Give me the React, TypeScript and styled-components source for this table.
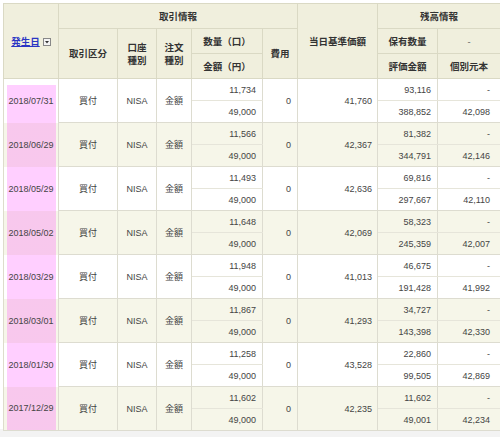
import React from "react";
import styled, { createGlobalStyle } from "styled-components";

const GlobalStyle = createGlobalStyle`
  html, body {
    margin: 0;
    padding: 0;
    background: #f3f3f3;
  }
  body {
    font-family: "Liberation Sans", "Noto Sans CJK JP", sans-serif;
  }
`;

const Page = styled.div`
  width: 500px;
  height: 437px;
  overflow: hidden;
  background: linear-gradient(#ffffff, #ffffff) no-repeat;
  background-size: 100% 429px;
  padding: 3px 0 0 3px;
  box-sizing: border-box;
`;

const Table = styled.table`
  border-collapse: collapse;
  table-layout: fixed;
  width: 497px;
  font-size: 9px;
  color: #444;
  border-top: 1px solid #dddccc;
  border-left: 1px solid #dddccc;
`;

const HeadCell = styled.th<{ $align?: string }>`
  background: #f0efdd;
  border: 1px solid #dad9c4;
  color: #333;
  font-weight: bold;
  font-size: 9.5px;
  line-height: 13px;
  padding: 0 4px;
  text-align: ${(p) => p.$align || "center"};
  vertical-align: middle;
  white-space: nowrap;
`;

const HeadRow = styled.tr`
  height: 25px;
`;

const SubRow = styled.tr`
  height: 22px;
`;

const Cell = styled.td<{ $alt: boolean; $align?: string; $pad?: number; $split?: boolean }>`
  background: ${(p) => (p.$alt ? "#f6f6e9" : "#ffffff")};
  border-right: 1px solid #dddcd0;
  border-bottom: 1px solid ${(p) => (p.$split ? "#e6e5da" : "#dddcd0")};
  text-align: ${(p) => p.$align || "center"};
  padding: 0 ${(p) => (p.$pad ?? 4)}px 0 4px;
  vertical-align: middle;
  white-space: nowrap;
  line-height: 12px;
`;

const DateCell = styled.td<{ $alt: boolean; $first: boolean; $last: boolean }>`
  background-color: ${(p) => (p.$alt ? "#f6f6e9" : "#ffffff")};
  background-image: linear-gradient(
    to right,
    transparent 3px,
    rgba(255, 0, 255, 0.19) 3px,
    rgba(255, 0, 255, 0.19) calc(100% - 2px),
    transparent calc(100% - 2px)
  );
  background-repeat: no-repeat;
  background-position: 0 ${(p) => (p.$first ? 6 : 0)}px;
  background-size: 100% calc(100% - ${(p) => (p.$first ? 6 : 0)}px);
  border-right: 1px solid #dddcd0;
  border-bottom: ${(p) => (p.$last ? "1px solid #dddcd0" : "none")};
  text-align: center;
  vertical-align: middle;
  padding: 0;
  color: #444;
  line-height: 12px;
`;

const SortLink = styled.a`
  color: #2b35c4;
  text-decoration: underline;
  font-weight: bold;
`;

const SortBox = styled.svg`
  vertical-align: -1px;
  margin-left: 3px;
`;

const Dash = styled.span`
  color: #666;
  font-weight: normal;
`;

type Row = {
  date: string;
  qty: string;
  amt: string;
  fee: string;
  nav: string;
  hold: string;
  val: string;
  cost: string;
};

const rows: Row[] = [
  { date: "2018/07/31", qty: "11,734", amt: "49,000", fee: "0", nav: "41,760", hold: "93,116", val: "388,852", cost: "42,098" },
  { date: "2018/06/29", qty: "11,566", amt: "49,000", fee: "0", nav: "42,367", hold: "81,382", val: "344,791", cost: "42,146" },
  { date: "2018/05/29", qty: "11,493", amt: "49,000", fee: "0", nav: "42,636", hold: "69,816", val: "297,667", cost: "42,110" },
  { date: "2018/05/02", qty: "11,648", amt: "49,000", fee: "0", nav: "42,069", hold: "58,323", val: "245,359", cost: "42,007" },
  { date: "2018/03/29", qty: "11,948", amt: "49,000", fee: "0", nav: "41,013", hold: "46,675", val: "191,428", cost: "41,992" },
  { date: "2018/03/01", qty: "11,867", amt: "49,000", fee: "0", nav: "41,293", hold: "34,727", val: "143,398", cost: "42,330" },
  { date: "2018/01/30", qty: "11,258", amt: "49,000", fee: "0", nav: "43,528", hold: "22,860", val: "99,505", cost: "42,869" },
  { date: "2017/12/29", qty: "11,602", amt: "49,000", fee: "0", nav: "42,235", hold: "11,602", val: "49,001", cost: "42,234" },
];

const widths = [55, 59, 39, 35, 71, 35, 80, 60, 63];

export default function App() {
  return (
    <>
      <GlobalStyle />
      <Page>
        <Table>
          <colgroup>
            {widths.map((w, i) => (
              <col key={i} style={{ width: w }} />
            ))}
          </colgroup>
          <thead>
            <HeadRow>
              <HeadCell rowSpan={3}>
                <SortLink href="#">発生日</SortLink>
                <SortBox width="8" height="8" viewBox="0 0 8 8">
                  <rect x="0.5" y="0.5" width="7" height="7" fill="#f4f4f4" stroke="#888" />
                  <path d="M2 3h4L4 5.5z" fill="#333" />
                </SortBox>
              </HeadCell>
              <HeadCell colSpan={5}>取引情報</HeadCell>
              <HeadCell rowSpan={3}>当日基準価額</HeadCell>
              <HeadCell colSpan={2}>残高情報</HeadCell>
            </HeadRow>
            <HeadRow>
              <HeadCell rowSpan={2}>取引区分</HeadCell>
              <HeadCell rowSpan={2}>
                口座
                <br />
                種別
              </HeadCell>
              <HeadCell rowSpan={2}>
                注文
                <br />
                種別
              </HeadCell>
              <HeadCell>数量（口）</HeadCell>
              <HeadCell rowSpan={2}>費用</HeadCell>
              <HeadCell>保有数量</HeadCell>
              <HeadCell>
                <Dash>-</Dash>
              </HeadCell>
            </HeadRow>
            <HeadRow>
              <HeadCell>金額（円）</HeadCell>
              <HeadCell>評価金額</HeadCell>
              <HeadCell>個別元本</HeadCell>
            </HeadRow>
          </thead>
          <tbody>
            {rows.map((r, i) => {
              const alt = i % 2 === 1;
              return (
                <React.Fragment key={r.date}>
                  <SubRow>
                    <DateCell rowSpan={2} $alt={alt} $first={i === 0} $last={i === rows.length - 1}>
                      {r.date}
                    </DateCell>
                    <Cell rowSpan={2} $alt={alt}>買付</Cell>
                    <Cell rowSpan={2} $alt={alt}>NISA</Cell>
                    <Cell rowSpan={2} $alt={alt}>金額</Cell>
                    <Cell $alt={alt} $align="right" $pad={6} $split>
                      {r.qty}
                    </Cell>
                    <Cell rowSpan={2} $alt={alt} $align="right" $pad={6}>
                      {r.fee}
                    </Cell>
                    <Cell rowSpan={2} $alt={alt} $align="right" $pad={5}>
                      {r.nav}
                    </Cell>
                    <Cell $alt={alt} $align="right" $pad={6} $split>
                      {r.hold}
                    </Cell>
                    <Cell $alt={alt} $align="right" $pad={10} $split>
                      -
                    </Cell>
                  </SubRow>
                  <SubRow>
                    <Cell $alt={alt} $align="right" $pad={6}>
                      {r.amt}
                    </Cell>
                    <Cell $alt={alt} $align="right" $pad={6}>
                      {r.val}
                    </Cell>
                    <Cell $alt={alt} $align="right" $pad={10}>
                      {r.cost}
                    </Cell>
                  </SubRow>
                </React.Fragment>
              );
            })}
          </tbody>
        </Table>
      </Page>
    </>
  );
}
